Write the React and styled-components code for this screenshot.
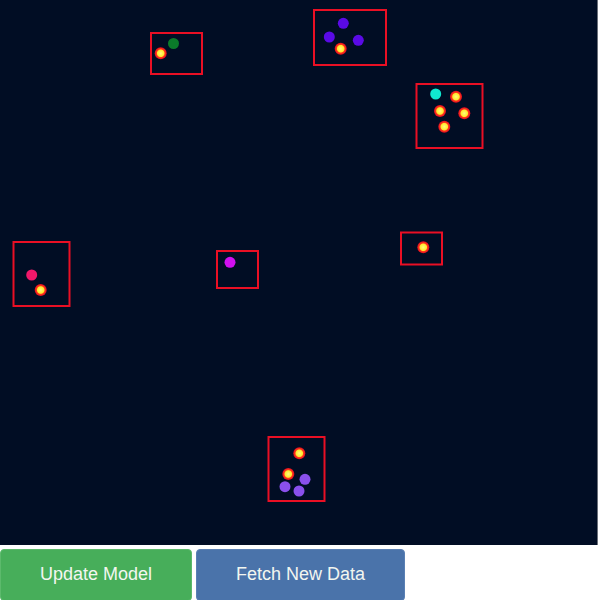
import React from 'react'
import styled, { createGlobalStyle } from 'styled-components'

const GlobalStyle = createGlobalStyle`
  body {
    margin: 0;
    background: #ffffff;
    font-family: "Liberation Sans", Arial, sans-serif;
  }
`

const clusters = [
  {
    box: [151, 33, 51, 41],
    dots: [{ x: 173.5, y: 43.5, c: '#0a7a2a' }],
    hits: [{ x: 160.7, y: 53.3 }],
  },
  {
    box: [314, 10, 72, 55],
    dots: [
      { x: 343.3, y: 23.3, c: '#5a0ae6' },
      { x: 329.3, y: 37, c: '#5a0ae6' },
      { x: 358.3, y: 40.3, c: '#5a0ae6' },
    ],
    hits: [{ x: 340.7, y: 48.7 }],
  },
  {
    box: [416.5, 84, 66, 64],
    dots: [{ x: 435.7, y: 94, c: '#10e8d0' }],
    hits: [
      { x: 456, y: 96.7 },
      { x: 440, y: 111 },
      { x: 464.3, y: 113.3 },
      { x: 444.3, y: 126.7 },
    ],
  },
  {
    box: [13.5, 242, 56, 64],
    dots: [{ x: 31.7, y: 275, c: '#f0186a' }],
    hits: [{ x: 40.7, y: 290 }],
  },
  {
    box: [217, 251, 41, 37],
    dots: [{ x: 230, y: 262.3, c: '#d010f0' }],
    hits: [],
  },
  {
    box: [401, 232.5, 41, 32],
    dots: [],
    hits: [{ x: 423.3, y: 247.3 }],
  },
  {
    box: [268.5, 437, 56, 64],
    dots: [
      { x: 305, y: 479.3, c: '#8a50ec' },
      { x: 285, y: 486.7, c: '#8a50ec' },
      { x: 299, y: 491, c: '#8a50ec' },
    ],
    hits: [
      { x: 299.3, y: 453.3 },
      { x: 288.3, y: 474 },
    ],
  },
]

const Page = styled.div`
  display: flex;
  flex-direction: column;
  gap: 4px;
`

const Canvas = styled.svg`
  display: block;
  width: 597px;
  height: 545px;
  background: #010d24;
  border-right: 1px solid #6b7079;
`

const Toolbar = styled.div`
  display: flex;
  gap: 4px;
`

const Button = styled.button`
  font-family: "Liberation Sans", Arial, sans-serif;
  font-size: 18px;
  line-height: 21px;
  color: #f2f6f0;
  background: ${(p) => p.$bg};
  border: 1px solid ${(p) => p.$edge};
  border-radius: 4px;
  padding: 14px 39px 15px;
  cursor: pointer;
`

export default function App() {
  return (
    <>
      <GlobalStyle />
      <Page>
        <Canvas viewBox="0 0 597 545">
          <defs>
            <radialGradient id="hit">
              <stop offset="0%" stopColor="#fffa80" />
              <stop offset="55%" stopColor="#ffe82a" />
              <stop offset="70%" stopColor="#ff3a1a" />
              <stop offset="100%" stopColor="#e00820" />
            </radialGradient>
          </defs>
          {clusters.map((cl, i) => (
            <g key={i}>
              <rect
                x={cl.box[0]}
                y={cl.box[1]}
                width={cl.box[2]}
                height={cl.box[3]}
                fill="none"
                stroke="#ea0f24"
                strokeWidth="2"
              />
              {cl.dots.map((d, j) => (
                <circle key={j} cx={d.x} cy={d.y} r="5.5" fill={d.c} />
              ))}
              {cl.hits.map((d, j) => (
                <circle key={j} cx={d.x} cy={d.y} r="6" fill="url(#hit)" />
              ))}
            </g>
          ))}
        </Canvas>
        <Toolbar>
          <Button $bg="#47ae5a" $edge="#5cba6c">Update Model</Button>
          <Button $bg="#4a73aa" $edge="#5a80b4">Fetch New Data</Button>
        </Toolbar>
      </Page>
    </>
  )
}
